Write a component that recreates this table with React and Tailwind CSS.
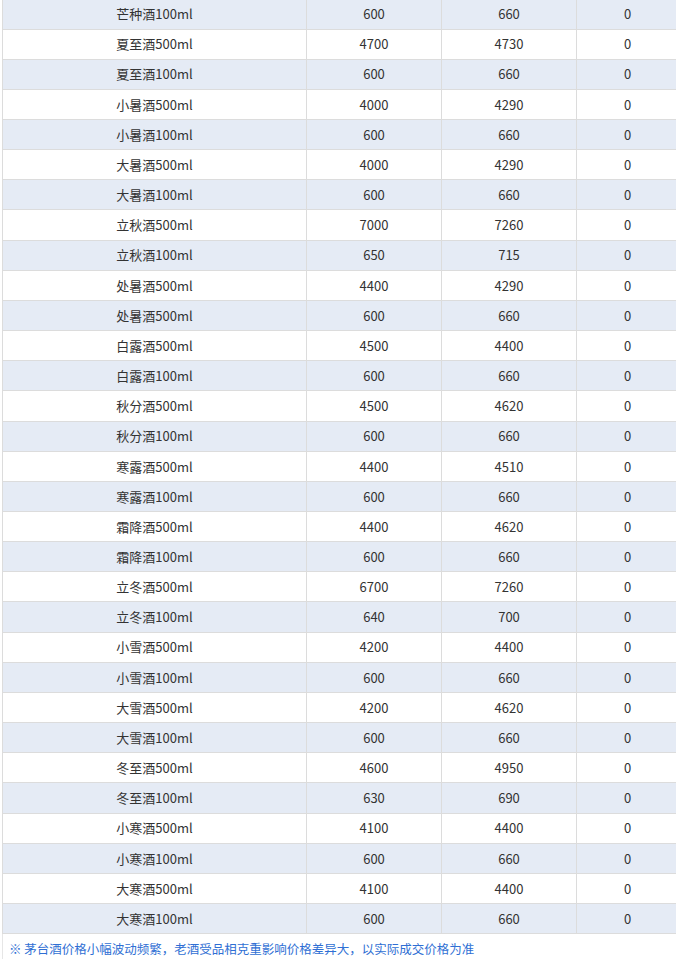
const rows = [
  ["芒种酒100ml", "600", "660", "0"],
  ["夏至酒500ml", "4700", "4730", "0"],
  ["夏至酒100ml", "600", "660", "0"],
  ["小暑酒500ml", "4000", "4290", "0"],
  ["小暑酒100ml", "600", "660", "0"],
  ["大暑酒500ml", "4000", "4290", "0"],
  ["大暑酒100ml", "600", "660", "0"],
  ["立秋酒500ml", "7000", "7260", "0"],
  ["立秋酒100ml", "650", "715", "0"],
  ["处暑酒500ml", "4400", "4290", "0"],
  ["处暑酒500ml", "600", "660", "0"],
  ["白露酒500ml", "4500", "4400", "0"],
  ["白露酒100ml", "600", "660", "0"],
  ["秋分酒500ml", "4500", "4620", "0"],
  ["秋分酒100ml", "600", "660", "0"],
  ["寒露酒500ml", "4400", "4510", "0"],
  ["寒露酒100ml", "600", "660", "0"],
  ["霜降酒500ml", "4400", "4620", "0"],
  ["霜降酒100ml", "600", "660", "0"],
  ["立冬酒500ml", "6700", "7260", "0"],
  ["立冬酒100ml", "640", "700", "0"],
  ["小雪酒500ml", "4200", "4400", "0"],
  ["小雪酒100ml", "600", "660", "0"],
  ["大雪酒500ml", "4200", "4620", "0"],
  ["大雪酒100ml", "600", "660", "0"],
  ["冬至酒500ml", "4600", "4950", "0"],
  ["冬至酒100ml", "630", "690", "0"],
  ["小寒酒500ml", "4100", "4400", "0"],
  ["小寒酒100ml", "600", "660", "0"],
  ["大寒酒500ml", "4100", "4400", "0"],
  ["大寒酒100ml", "600", "660", "0"],
];

const PriceRow = ({ row, index }) => (
  <div
    className={
      "grid grid-cols-[304px_135px_135px_1fr] h-[30.16px] border-b border-[#dcdcdc] " +
      (index % 2 === 0 ? "bg-[#e5ebf5]" : "bg-white")
    }
  >
    {row.map((cell, i) => (
      <div
        key={i}
        className={
          "flex items-center justify-center " +
          (i < 3 ? "border-r border-[#dcdcdc]" : "")
        }
      >
        {cell}
      </div>
    ))}
  </div>
);

export default function App() {
  return (
    <div
      className="w-[676px] h-[964px] overflow-hidden bg-white text-[#333] text-[13px]"
      style={{ fontFamily: '"Noto Sans CJK SC", "Noto Sans", sans-serif' }}
    >
      <div className="ml-[2px] w-[676px] mt-[-0.66px] border-l border-[#dcdcdc]">
        {rows.map((row, i) => (
          <PriceRow key={i} row={row} index={i} />
        ))}
      </div>
      <div className="ml-[2px] border-l border-[#e6e6e6] pl-[6px] pt-[5px] leading-[20px] text-[12.5px] text-[#2f6fd4]">
        ※ 茅台酒价格小幅波动频繁，老酒受品相克重影响价格差异大，以实际成交价格为准
      </div>
    </div>
  );
}
